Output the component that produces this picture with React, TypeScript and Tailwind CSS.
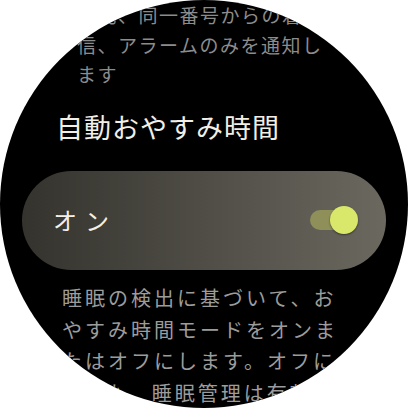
import React from 'react';

const topLines = ['絡先、同一番号からの着', '信、アラームのみを通知し', 'ます'];
const bottomLines = [
  '睡眠の検出に基づいて、お',
  'やすみ時間モードをオンま',
  'たはオフにします。オフに',
  'しても、睡眠管理は有効の',
];

const App: React.FC = () => {
  return (
    <div
      className="w-[408px] h-[408px] bg-white"
      style={{ fontFamily: '"Noto Sans CJK JP", "Noto Sans", sans-serif' }}
    >
      <div className="w-[408px] h-[408px] rounded-full bg-black overflow-hidden flex flex-col">
        {/* previous setting description */}
        <div className="pl-[77px] text-[19px] leading-[29.5px] tracking-[1.5px] text-[#8c8c8c] whitespace-nowrap">
          {topLines.map(line => (
            <div key={line}>{line}</div>
          ))}
        </div>

        <div className="mt-[20px] pl-[56px] text-[27px] leading-[36px] tracking-[1px] text-[#f1eee7] whitespace-nowrap">
          自動おやすみ時間
        </div>

        <div className="mt-[26px] mx-[22px] h-[103px] rounded-full bg-gradient-to-r from-[#34332d] via-[#4f4d46] to-[#6b685f] flex items-center justify-between pl-[31px] pr-[28px]">
          <span className="text-[24px] leading-none tracking-[8px] text-[#f3f0e9]">オン</span>
          <div className="relative w-[48px] h-[28px] flex items-center">
            <div className="w-[40px] h-[20px] rounded-full bg-[#8e8f59]" />
            <div className="absolute right-0 top-0 w-[28px] h-[28px] rounded-full bg-[#d9e86a] shadow-[0_1px_2px_rgba(0,0,0,0.45)]" />
          </div>
        </div>

        <div className="mt-[12px] pl-[62px] text-[20px] leading-[31.5px] tracking-[3px] text-[#9c9c9c] whitespace-nowrap">
          {bottomLines.map(line => (
            <div key={line}>{line}</div>
          ))}
        </div>
      </div>
    </div>
  );
};

export default App;
